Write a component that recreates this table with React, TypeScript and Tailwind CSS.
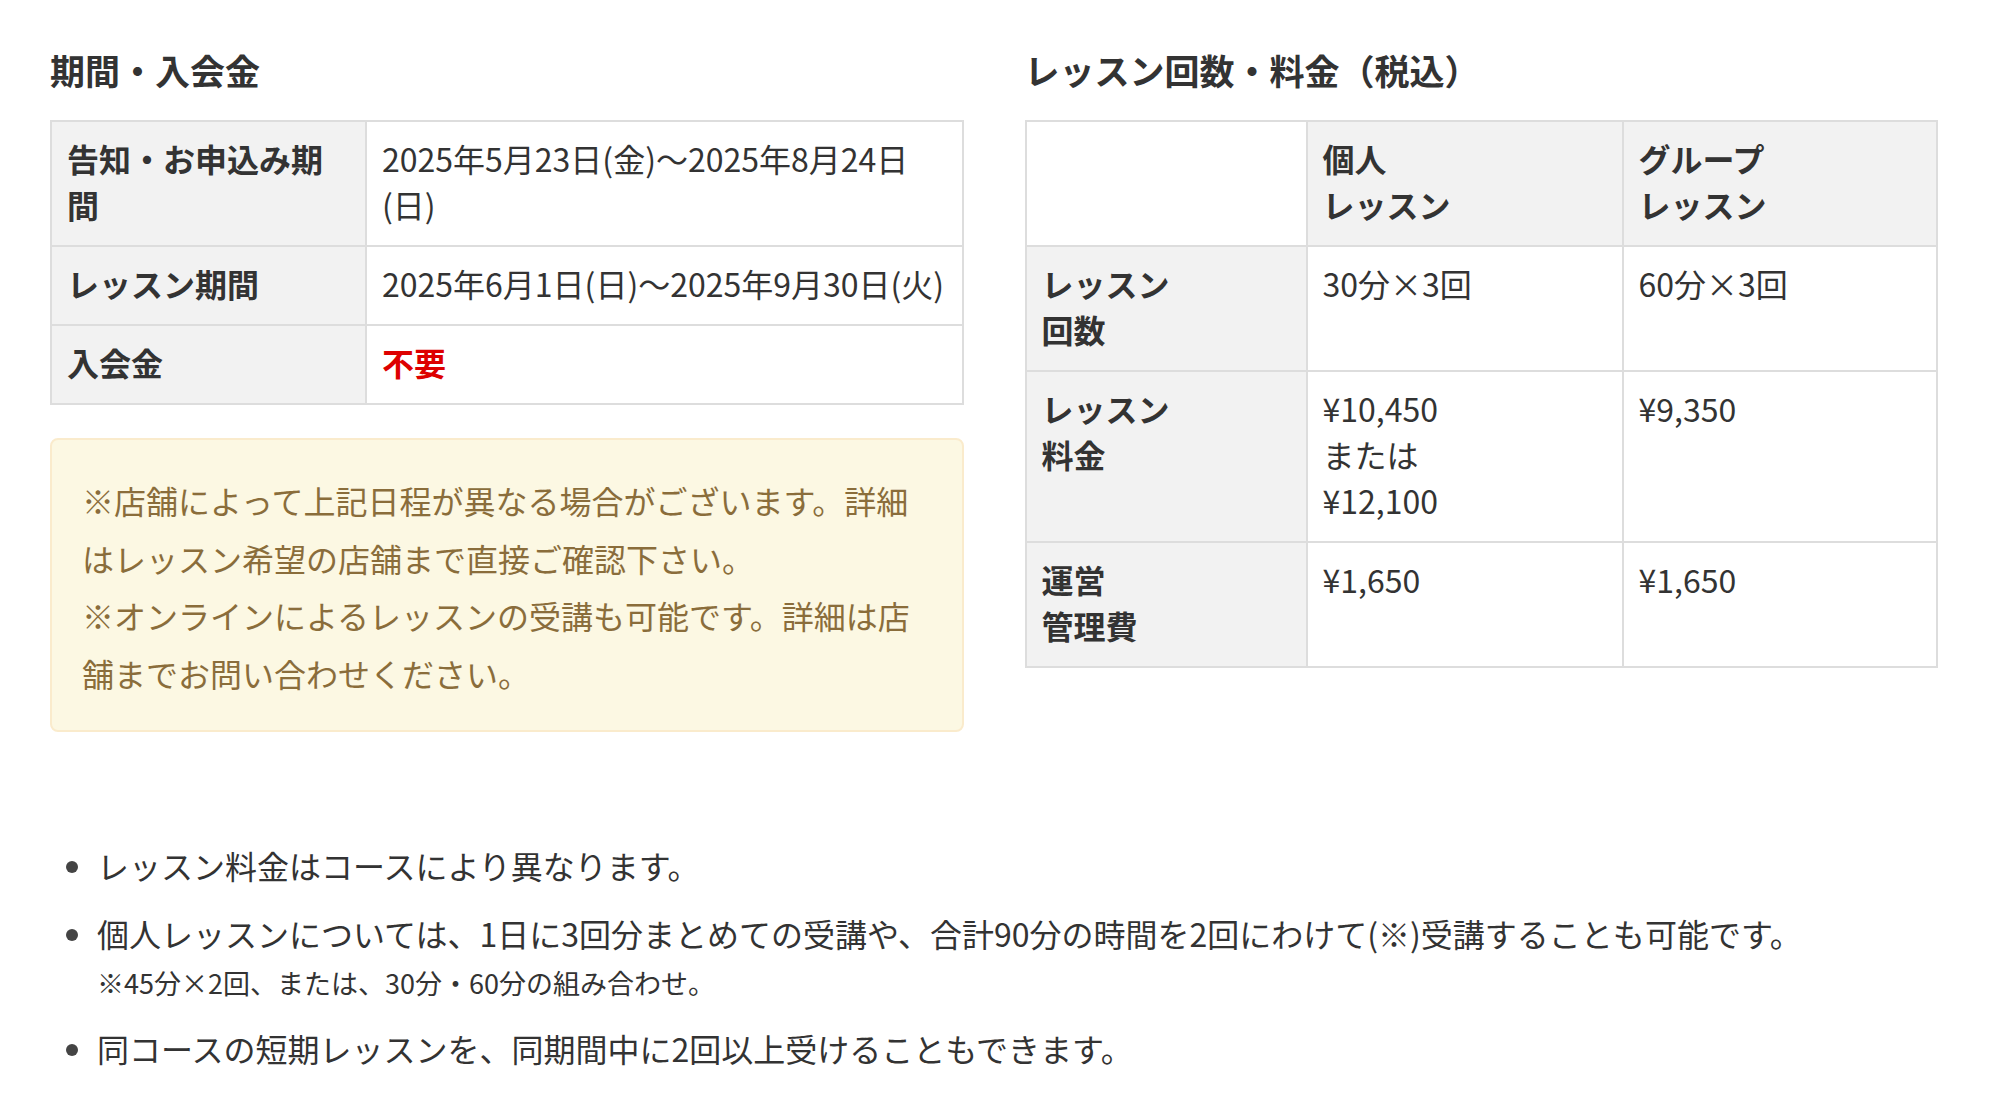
import React from "react";

const th = "border-2 border-[#dddddd] bg-[#f2f2f2] px-[15px] pt-[13px] pb-[18px] text-left align-top font-bold";
const td = "border-2 border-[#dddddd] bg-white px-[15px] pt-[13px] pb-[18px] text-left align-top font-normal";

export default function App() {
  return (
    <main className="min-h-screen bg-white pl-[50px] pr-[70px] pt-[48px] pb-[40px] font-['Noto_Sans_CJK_JP','Noto_Sans',sans-serif] text-[#333333]">
      <div className="grid grid-cols-2 gap-x-[61px]">
        <section>
          <h2 className="mb-[28px] text-[35px] leading-[44px] font-bold">期間・入会金</h2>
          <table className="w-full border-collapse border-2 border-[#dddddd] text-[32px] leading-[46px]">
            <tbody>
              <tr>
                <th className={th + " w-[315px]"}>告知・お申込み期間</th>
                <td className={td}>2025年5月23日(金)〜2025年8月24日(日)</td>
              </tr>
              <tr>
                <th className={th}>レッスン期間</th>
                <td className={td}>2025年6月1日(日)〜2025年9月30日(火)</td>
              </tr>
              <tr>
                <th className={th}>入会金</th>
                <td className={td}>
                  <span className="font-bold text-[#dd0000]">不要</span>
                </td>
              </tr>
            </tbody>
          </table>

          <div className="mt-[33px] rounded-[8px] border-2 border-[#faebcc] bg-[#fcf8e3] pl-[30px] pr-[30px] pt-[32px] pb-[28px] text-[32px] leading-[57.6px] text-[#8a6d3b]">
            <p>※店舗によって上記日程が異なる場合がございます。詳細はレッスン希望の店舗まで直接ご確認下さい。</p>
            <p>※オンラインによるレッスンの受講も可能です。詳細は店舗までお問い合わせください。</p>
          </div>
        </section>

        <section>
          <h2 className="mb-[28px] text-[35px] leading-[44px] font-bold">レッスン回数・料金（税込）</h2>
          <table className="w-full table-fixed border-collapse border-2 border-[#dddddd] text-[32px] leading-[46px]">
            <tbody>
              <tr>
                <td className={td + " w-[281px]"}></td>
                <th className={th + " w-[316px]"}>
                  個人
                  <br />
                  レッスン
                </th>
                <th className={th}>
                  グループ
                  <br />
                  レッスン
                </th>
              </tr>
              <tr>
                <th className={th}>
                  レッスン
                  <br />
                  回数
                </th>
                <td className={td}>30分×3回</td>
                <td className={td}>60分×3回</td>
              </tr>
              <tr>
                <th className={th}>
                  レッスン
                  <br />
                  料金
                </th>
                <td className={td}>
                  ¥10,450
                  <br />
                  または
                  <br />
                  ¥12,100
                </td>
                <td className={td}>¥9,350</td>
              </tr>
              <tr>
                <th className={th}>
                  運営
                  <br />
                  管理費
                </th>
                <td className={td}>¥1,650</td>
                <td className={td}>¥1,650</td>
              </tr>
            </tbody>
          </table>
        </section>
      </div>

      <ul className="mt-[110px] list-disc pl-[47px] text-[32px] leading-[46px] marker:text-[#444444]">
        <li className="mb-[22px]">レッスン料金はコースにより異なります。</li>
        <li className="mb-[22px]">
          個人レッスンについては、1日に3回分まとめての受講や、合計90分の時間を2回にわけて(※)受講することも可能です。
          <span className="mt-[7px] block text-[27px] leading-[40px]">※45分×2回、または、30分・60分の組み合わせ。</span>
        </li>
        <li>同コースの短期レッスンを、同期間中に2回以上受けることもできます。</li>
      </ul>
    </main>
  );
}
